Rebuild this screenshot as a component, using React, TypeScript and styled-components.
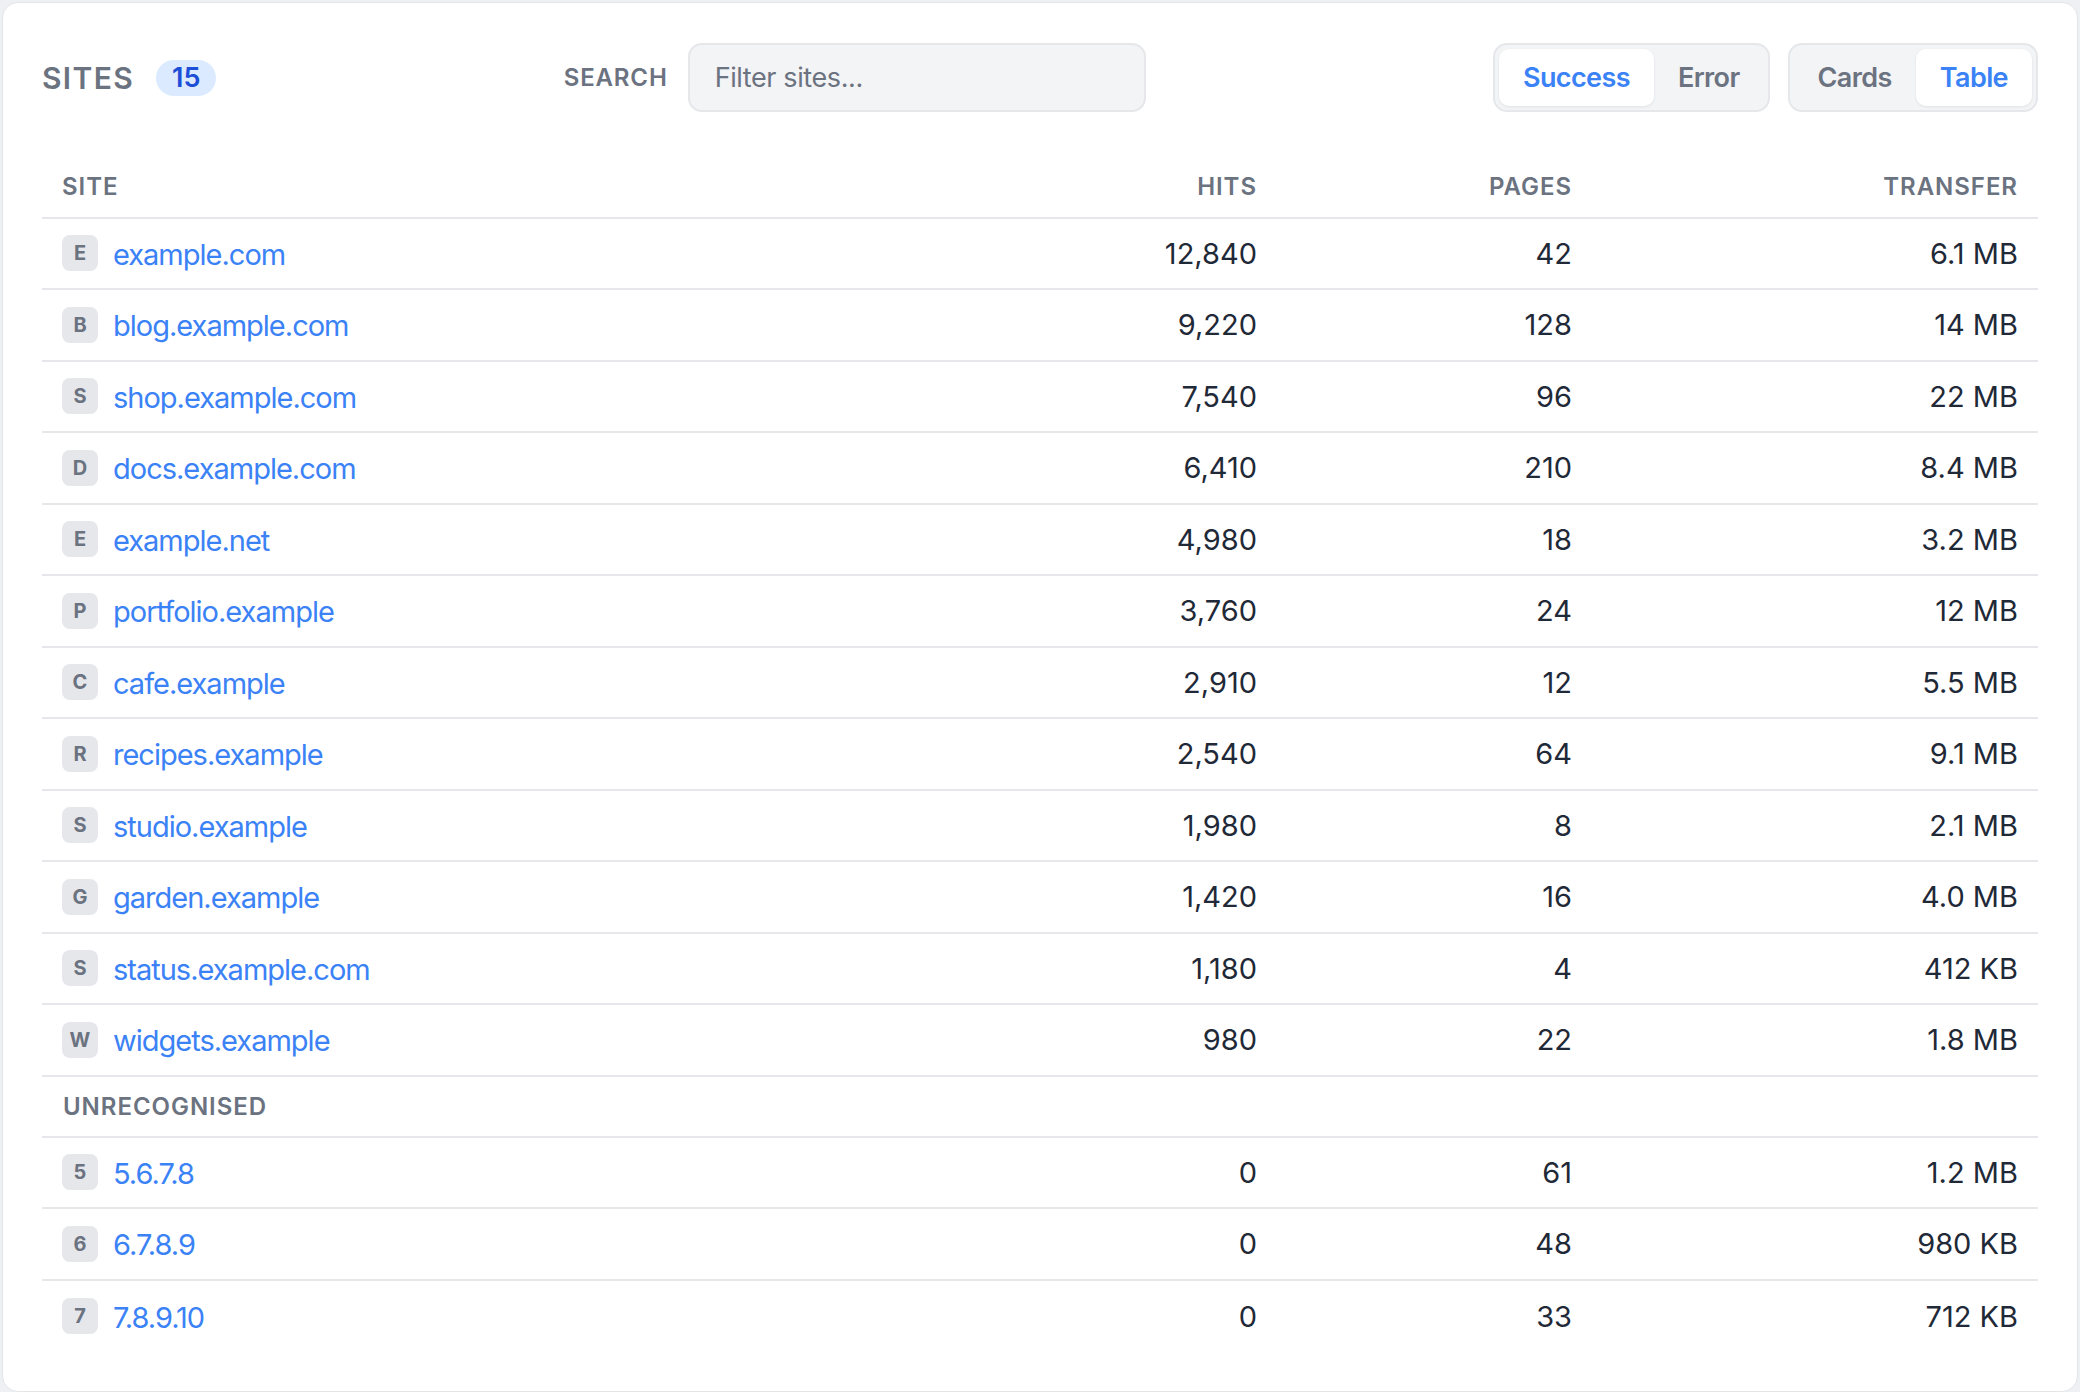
import React from "react";
import styled, { createGlobalStyle } from "styled-components";

const GlobalStyle = createGlobalStyle`
  html, body {
    margin: 0;
    padding: 0;
    background: #eef0f3;
    font-family: Inter, "Noto Sans", "Liberation Sans", sans-serif;
  }
  * {
    box-sizing: border-box;
  }
`;

const Page = styled.div`
  padding: 2px;
`;

const Card = styled.section`
  background: #ffffff;
  border: 1px solid #e3e5e9;
  border-radius: 16px;
  padding: 40px 39px 39px;
`;

const Toolbar = styled.header`
  display: flex;
  align-items: center;
  justify-content: space-between;
  height: 69px;
`;

const TitleGroup = styled.div`
  display: flex;
  align-items: center;
  gap: 22px;
`;

const Title = styled.h1`
  margin: 0;
  font-size: 30px;
  font-weight: 600;
  letter-spacing: 0.045em;
  color: #6b7280;
`;

const CountPill = styled.span`
  display: inline-flex;
  align-items: center;
  justify-content: center;
  height: 36px;
  padding: 0 16px;
  border-radius: 18px;
  background: #dbeafe;
  color: #1d4ed8;
  font-size: 27px;
  font-weight: 600;
`;

const SearchGroup = styled.label`
  display: flex;
  align-items: center;
  gap: 20px;
`;

const SearchLabel = styled.span`
  font-size: 24px;
  font-weight: 600;
  letter-spacing: 0.035em;
  color: #6b7280;
`;

const SearchInput = styled.input`
  width: 458px;
  height: 69px;
  padding: 0 25px;
  border: 2px solid #e5e7eb;
  border-radius: 14px;
  background: #f3f4f6;
  font-family: inherit;
  font-size: 27px;
  letter-spacing: -0.4px;
  color: #1f2937;
  outline: none;

  &::placeholder {
    color: #6b7280;
  }
`;

const Controls = styled.div`
  display: flex;
  gap: 18px;
`;

const Segmented = styled.div`
  display: flex;
  padding: 4px;
  height: 69px;
  border: 2px solid #e5e7eb;
  border-radius: 14px;
  background: #f3f4f6;
`;

const SegButton = styled.button<{ $active?: boolean }>`
  height: 57px;
  padding: 0 24px;
  border: none;
  border-radius: 10px;
  font-family: inherit;
  font-size: 27px;
  font-weight: 600;
  letter-spacing: -0.6px;
  cursor: pointer;
  color: ${(p) => (p.$active ? "#3b82f6" : "#6b7280")};
  background: ${(p) => (p.$active ? "#ffffff" : "transparent")};
  box-shadow: ${(p) => (p.$active ? "0 1px 3px rgba(15, 23, 42, 0.08)" : "none")};
`;

const Table = styled.div`
  margin-top: 44px;
`;

const columns = "1fr 320px 315px 446px";

const HeadRow = styled.div`
  display: grid;
  grid-template-columns: ${columns};
  align-items: center;
  height: 62.5px;
  border-bottom: 2px solid #e5e7eb;
`;

const HeadCell = styled.div<{ $align?: "left" | "right" }>`
  padding: 0 20px;
  text-align: ${(p) => p.$align || "left"};
  font-size: 24px;
  font-weight: 600;
  letter-spacing: 0.04em;
  color: #6b7280;
`;

const Row = styled.div<{ $last?: boolean }>`
  display: grid;
  grid-template-columns: ${columns};
  align-items: center;
  height: 71.5px;
  border-bottom: ${(p) => (p.$last ? "none" : "2px solid #e5e7eb")};
`;

const Cell = styled.div<{ $align?: "left" | "right" }>`
  padding: 0 20px;
  text-align: ${(p) => p.$align || "left"};
  font-size: 29px;
  color: #1f2937;
`;

const SiteCell = styled.div`
  display: flex;
  align-items: center;
  gap: 15px;
  padding: 0 20px;
`;

const Initial = styled.span`
  display: inline-flex;
  align-items: center;
  justify-content: center;
  flex: none;
  width: 36px;
  height: 36px;
  border-radius: 8px;
  background: #e5e7eb;
  color: #6b7280;
  font-size: 20px;
  font-weight: 700;
`;

const SiteLink = styled.a`
  font-size: 29px;
  letter-spacing: -1px;
  color: #3b82f6;
  text-decoration: none;
  padding-top: 2px;
`;

const SectionRow = styled.div`
  display: flex;
  align-items: center;
  height: 61px;
  padding: 0 21px;
  border-bottom: 2px solid #e5e7eb;
  font-size: 24px;
  font-weight: 600;
  letter-spacing: 0.04em;
  color: #6b7280;
`;

type Site = { name: string; hits: string; pages: string; transfer: string };

const sites: Site[] = [
  { name: "example.com", hits: "12,840", pages: "42", transfer: "6.1 MB" },
  { name: "blog.example.com", hits: "9,220", pages: "128", transfer: "14 MB" },
  { name: "shop.example.com", hits: "7,540", pages: "96", transfer: "22 MB" },
  { name: "docs.example.com", hits: "6,410", pages: "210", transfer: "8.4 MB" },
  { name: "example.net", hits: "4,980", pages: "18", transfer: "3.2 MB" },
  { name: "portfolio.example", hits: "3,760", pages: "24", transfer: "12 MB" },
  { name: "cafe.example", hits: "2,910", pages: "12", transfer: "5.5 MB" },
  { name: "recipes.example", hits: "2,540", pages: "64", transfer: "9.1 MB" },
  { name: "studio.example", hits: "1,980", pages: "8", transfer: "2.1 MB" },
  { name: "garden.example", hits: "1,420", pages: "16", transfer: "4.0 MB" },
  { name: "status.example.com", hits: "1,180", pages: "4", transfer: "412 KB" },
  { name: "widgets.example", hits: "980", pages: "22", transfer: "1.8 MB" },
];

const unrecognised: Site[] = [
  { name: "5.6.7.8", hits: "0", pages: "61", transfer: "1.2 MB" },
  { name: "6.7.8.9", hits: "0", pages: "48", transfer: "980 KB" },
  { name: "7.8.9.10", hits: "0", pages: "33", transfer: "712 KB" },
];

function SiteRow({ site, last }: { site: Site; last?: boolean }) {
  return (
    <Row $last={last}>
      <SiteCell>
        <Initial>{site.name[0].toUpperCase()}</Initial>
        <SiteLink href="#">{site.name}</SiteLink>
      </SiteCell>
      <Cell $align="right">{site.hits}</Cell>
      <Cell $align="right">{site.pages}</Cell>
      <Cell $align="right">{site.transfer}</Cell>
    </Row>
  );
}

export default function App() {
  return (
    <Page>
      <GlobalStyle />
      <Card>
        <Toolbar>
          <TitleGroup>
            <Title>SITES</Title>
            <CountPill>15</CountPill>
          </TitleGroup>
          <SearchGroup>
            <SearchLabel>SEARCH</SearchLabel>
            <SearchInput placeholder="Filter sites..." />
          </SearchGroup>
          <Controls>
            <Segmented>
              <SegButton $active>Success</SegButton>
              <SegButton>Error</SegButton>
            </Segmented>
            <Segmented>
              <SegButton>Cards</SegButton>
              <SegButton $active>Table</SegButton>
            </Segmented>
          </Controls>
        </Toolbar>

        <Table>
          <HeadRow>
            <HeadCell>SITE</HeadCell>
            <HeadCell $align="right">HITS</HeadCell>
            <HeadCell $align="right">PAGES</HeadCell>
            <HeadCell $align="right">TRANSFER</HeadCell>
          </HeadRow>
          {sites.map((s) => (
            <SiteRow key={s.name} site={s} />
          ))}
          <SectionRow>UNRECOGNISED</SectionRow>
          {unrecognised.map((s, i) => (
            <SiteRow key={s.name} site={s} last={i === unrecognised.length - 1} />
          ))}
        </Table>
      </Card>
    </Page>
  );
}
